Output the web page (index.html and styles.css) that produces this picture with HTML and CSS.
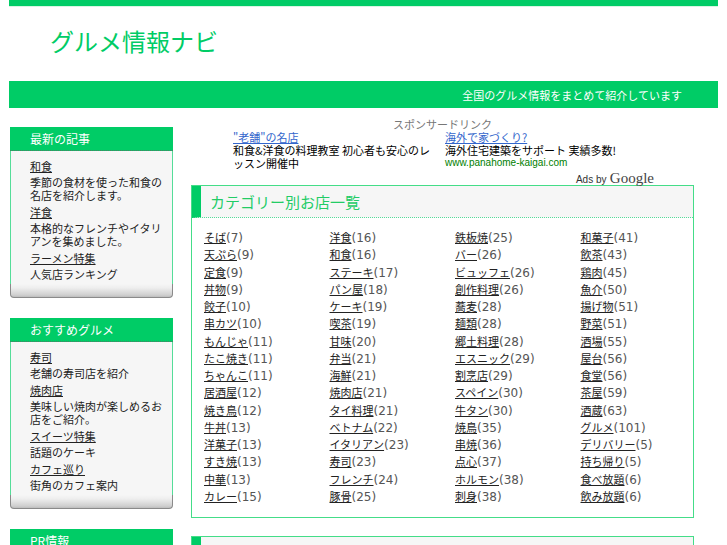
FILE: index.html
```html
<!DOCTYPE html>
<html lang="ja">
<head>
<meta charset="utf-8">
<title>グルメ情報ナビ</title>
<link rel="stylesheet" href="styles.css">
</head>
<body>
<div class="page">
  <div class="topbar"></div>
  <header class="masthead">
    <h1 class="site-title">グルメ情報ナビ</h1>
  </header>
  <div class="tagline-bar">
    <p class="tagline">全国のグルメ情報をまとめて紹介しています</p>
  </div>

  <div class="layout">
    <aside class="sidebar">
      <section class="side-box">
        <h2 class="side-head">最新の記事</h2>
        <div class="side-body">
          <dl class="side-list">
            <dt><a href="#">和食</a></dt>
            <dd>季節の食材を使った和食の名店を紹介します。</dd>
            <dt><a href="#">洋食</a></dt>
            <dd>本格的なフレンチやイタリアンを集めました。</dd>
            <dt><a href="#">ラーメン特集</a></dt>
            <dd>人気店ランキング</dd>
          </dl>
        </div>
        <div class="side-foot"></div>
      </section>

      <section class="side-box">
        <h2 class="side-head">おすすめグルメ</h2>
        <div class="side-body">
          <dl class="side-list">
            <dt><a href="#">寿司</a></dt>
            <dd>老舗の寿司店を紹介</dd>
            <dt><a href="#">焼肉店</a></dt>
            <dd>美味しい焼肉が楽しめるお店をご紹介。</dd>
            <dt><a href="#">スイーツ特集</a></dt>
            <dd>話題のケーキ</dd>
            <dt><a href="#">カフェ巡り</a></dt>
            <dd>街角のカフェ案内</dd>
          </dl>
        </div>
        <div class="side-foot"></div>
      </section>

      <section class="side-box">
        <h2 class="side-head">PR情報</h2>
      </section>
    </aside>

    <main class="main">
      <div class="ads">
        <p class="ads-label">スポンサードリンク</p>
        <div class="ads-row">
          <div class="ad">
            <a class="ad-title" href="#">"老舗"の名店</a>
            <p class="ad-text">和食&amp;洋食の料理教室 初心者も安心のレッスン開催中</p>
          </div>
          <div class="ad">
            <a class="ad-title" href="#">海外で家づくり?</a>
            <p class="ad-text">海外住宅建築をサポート 実績多数!</p>
            <p class="ad-url">www.panahome-kaigai.com</p>
          </div>
        </div>
        <p class="ads-by"><span class="ads-by-small">Ads by</span> <span class="ads-google">Google</span></p>
      </div>

      <section class="cat-box">
        <h2 class="cat-head">カテゴリー別お店一覧</h2>
        <ul class="cat-list">
          <li><a href="#">そば</a>(7)</li>
          <li><a href="#">天ぷら</a>(9)</li>
          <li><a href="#">定食</a>(9)</li>
          <li><a href="#">丼物</a>(9)</li>
          <li><a href="#">餃子</a>(10)</li>
          <li><a href="#">串カツ</a>(10)</li>
          <li><a href="#">もんじゃ</a>(11)</li>
          <li><a href="#">たこ焼き</a>(11)</li>
          <li><a href="#">ちゃんこ</a>(11)</li>
          <li><a href="#">居酒屋</a>(12)</li>
          <li><a href="#">焼き鳥</a>(12)</li>
          <li><a href="#">牛丼</a>(13)</li>
          <li><a href="#">洋菓子</a>(13)</li>
          <li><a href="#">すき焼</a>(13)</li>
          <li><a href="#">中華</a>(13)</li>
          <li><a href="#">カレー</a>(15)</li>

          <li><a href="#">洋食</a>(16)</li>
          <li><a href="#">和食</a>(16)</li>
          <li><a href="#">ステーキ</a>(17)</li>
          <li><a href="#">パン屋</a>(18)</li>
          <li><a href="#">ケーキ</a>(19)</li>
          <li><a href="#">喫茶</a>(19)</li>
          <li><a href="#">甘味</a>(20)</li>
          <li><a href="#">弁当</a>(21)</li>
          <li><a href="#">海鮮</a>(21)</li>
          <li><a href="#">焼肉店</a>(21)</li>
          <li><a href="#">タイ料理</a>(21)</li>
          <li><a href="#">ベトナム</a>(22)</li>
          <li><a href="#">イタリアン</a>(23)</li>
          <li><a href="#">寿司</a>(23)</li>
          <li><a href="#">フレンチ</a>(24)</li>
          <li><a href="#">豚骨</a>(25)</li>

          <li><a href="#">鉄板焼</a>(25)</li>
          <li><a href="#">バー</a>(26)</li>
          <li><a href="#">ビュッフェ</a>(26)</li>
          <li><a href="#">創作料理</a>(26)</li>
          <li><a href="#">蕎麦</a>(28)</li>
          <li><a href="#">麺類</a>(28)</li>
          <li><a href="#">郷土料理</a>(28)</li>
          <li><a href="#">エスニック</a>(29)</li>
          <li><a href="#">割烹店</a>(29)</li>
          <li><a href="#">スペイン</a>(30)</li>
          <li><a href="#">牛タン</a>(30)</li>
          <li><a href="#">焼鳥</a>(35)</li>
          <li><a href="#">串焼</a>(36)</li>
          <li><a href="#">点心</a>(37)</li>
          <li><a href="#">ホルモン</a>(38)</li>
          <li><a href="#">刺身</a>(38)</li>

          <li><a href="#">和菓子</a>(41)</li>
          <li><a href="#">飲茶</a>(43)</li>
          <li><a href="#">鶏肉</a>(45)</li>
          <li><a href="#">魚介</a>(50)</li>
          <li><a href="#">揚げ物</a>(51)</li>
          <li><a href="#">野菜</a>(51)</li>
          <li><a href="#">酒場</a>(55)</li>
          <li><a href="#">屋台</a>(56)</li>
          <li><a href="#">食堂</a>(56)</li>
          <li><a href="#">茶屋</a>(59)</li>
          <li><a href="#">酒蔵</a>(63)</li>
          <li><a href="#">グルメ</a>(101)</li>
          <li><a href="#">デリバリー</a>(5)</li>
          <li><a href="#">持ち帰り</a>(5)</li>
          <li><a href="#">食べ放題</a>(6)</li>
          <li><a href="#">飲み放題</a>(6)</li>
        </ul>
      </section>

      <section class="cat-box cat-box-next">
        <h2 class="cat-head">&nbsp;</h2>
      </section>
    </main>
  </div>
</div>
</body>
</html>
```

FILE: styles.css
```css
* {
  box-sizing: border-box;
}

html, body {
  margin: 0;
  padding: 0;
  background: #ffffff;
}

body {
  font-family: "DejaVu Sans", "Noto Sans CJK JP", sans-serif;
  color: #333333;
  font-size: 12px;
}

a {
  color: inherit;
}

.page {
  margin: 0 9px;
  height: 545px;
  overflow: hidden;
}

.topbar {
  height: 6px;
  background: #00cc66;
  border-bottom: 1px solid #d8f5e4;
  box-sizing: content-box;
}

.masthead {
  height: 74px;
  display: flex;
  align-items: center;
  padding-left: 41px;
}

.site-title {
  margin: 0;
  font-family: "Noto Sans CJK JP", sans-serif;
  font-size: 24px;
  line-height: 28px;
  font-weight: normal;
  color: #00cc66;
  padding-bottom: 6px;
}

.tagline-bar {
  height: 27px;
  background: #00cc66;
  display: flex;
  align-items: center;
  justify-content: flex-end;
  padding-right: 36px;
}

.tagline {
  margin: 0;
  font-family: "Noto Sans CJK JP", sans-serif;
  font-size: 11px;
  line-height: 14px;
  color: #ffffff;
}

.layout {
  display: flex;
  gap: 18px;
  padding-left: 1px;
}

/* Sidebar */
.sidebar {
  width: 163px;
  flex: none;
  padding-top: 19px;
}

.side-box {
  margin-bottom: 20px;
}

.side-head {
  margin: 0;
  height: 24px;
  background: #00cc66;
  color: #ffffff;
  font-family: "Noto Sans CJK JP", sans-serif;
  font-size: 12px;
  line-height: 23px;
  font-weight: normal;
  padding-left: 20px;
  border-bottom: 1px dotted #557766;
}

.side-body {
  background: #f6f6f6;
  border-left: 1px solid #55dd99;
  border-right: 1px solid #55dd99;
  padding: 9px 9px 3px 19px;
}

.side-list {
  margin: 0;
  font-family: "Noto Sans CJK JP", sans-serif;
  font-size: 11px;
  line-height: 13px;
  color: #222222;
}

.side-list dt {
  margin: 0 0 3px;
}

.side-list dt a {
  color: #222222;
  text-decoration: underline;
}

.side-list dd {
  margin: 0 0 4px;
}

.side-list dd:last-child {
  margin-bottom: 0;
}

.side-foot {
  height: 14px;
  border: 1px solid #8a8a8a;
  border-top: none;
  border-radius: 0 0 4px 4px;
  background: linear-gradient(#f6f6f6 0%, #eeeeee 30%, #dddddd 60%, #cfcfcf 85%, #bdbdbd 100%);
}

/* Main */
.main {
  width: 503px;
  flex: none;
  padding-top: 9px;
}

.ads {
  height: 68px;
  font-family: "Liberation Sans", "Noto Sans CJK JP", sans-serif;
}

.ads-label {
  margin: 0;
  text-align: center;
  font-family: "Noto Sans CJK JP", sans-serif;
  font-size: 11px;
  line-height: 14px;
  color: #777777;
}

.ads-row {
  display: grid;
  grid-template-columns: 212px 212px;
  padding-left: 42px;
}

.ad-title {
  display: block;
  font-family: "Noto Sans CJK JP", sans-serif;
  font-size: 11px;
  line-height: 13px;
  color: #3366cc;
  text-decoration: underline;
}

.ad-text {
  margin: 0;
  font-family: "Noto Sans CJK JP", sans-serif;
  font-size: 11px;
  line-height: 13px;
  color: #000000;
  padding-right: 14px;
}

.ad-url {
  margin: 0;
  font-family: "Liberation Sans", sans-serif;
  font-size: 10px;
  line-height: 11px;
  color: #008000;
}

.ads-by {
  margin: 0;
  text-align: right;
  padding-right: 40px;
  line-height: 16px;
  color: #333333;
}

.ads-by-small {
  font-family: "Liberation Sans", sans-serif;
  font-size: 10px;
}

.ads-google {
  font-family: "Liberation Serif", serif;
  font-size: 15px;
  color: #444444;
}

.cat-box {
  border: 1px solid #44dd88;
  background: #ffffff;
}

.cat-head {
  margin: 0;
  height: 32px;
  background: #f6f6f6;
  border-left: 9px solid #00cc66;
  border-bottom: 1px dotted #55dd99;
  padding-left: 9px;
  font-family: "Noto Sans CJK JP", sans-serif;
  font-size: 15px;
  line-height: 31px;
  font-weight: normal;
  color: #22cc66;
}

.cat-list {
  list-style: none;
  margin: 0;
  padding: 11px 12px 12px;
  display: grid;
  grid-auto-flow: column;
  grid-template-rows: repeat(16, 17.28px);
  grid-template-columns: repeat(4, 125.5px);
  font-size: 12px;
  line-height: 17.28px;
  color: #555555;
}

.cat-list li {
  white-space: nowrap;
}

.cat-list a {
  color: #222222;
  text-decoration: underline;
  font-family: "Noto Sans CJK JP", sans-serif;
  font-size: 11px;
}

.cat-box-next {
  margin-top: 18px;
}
```
